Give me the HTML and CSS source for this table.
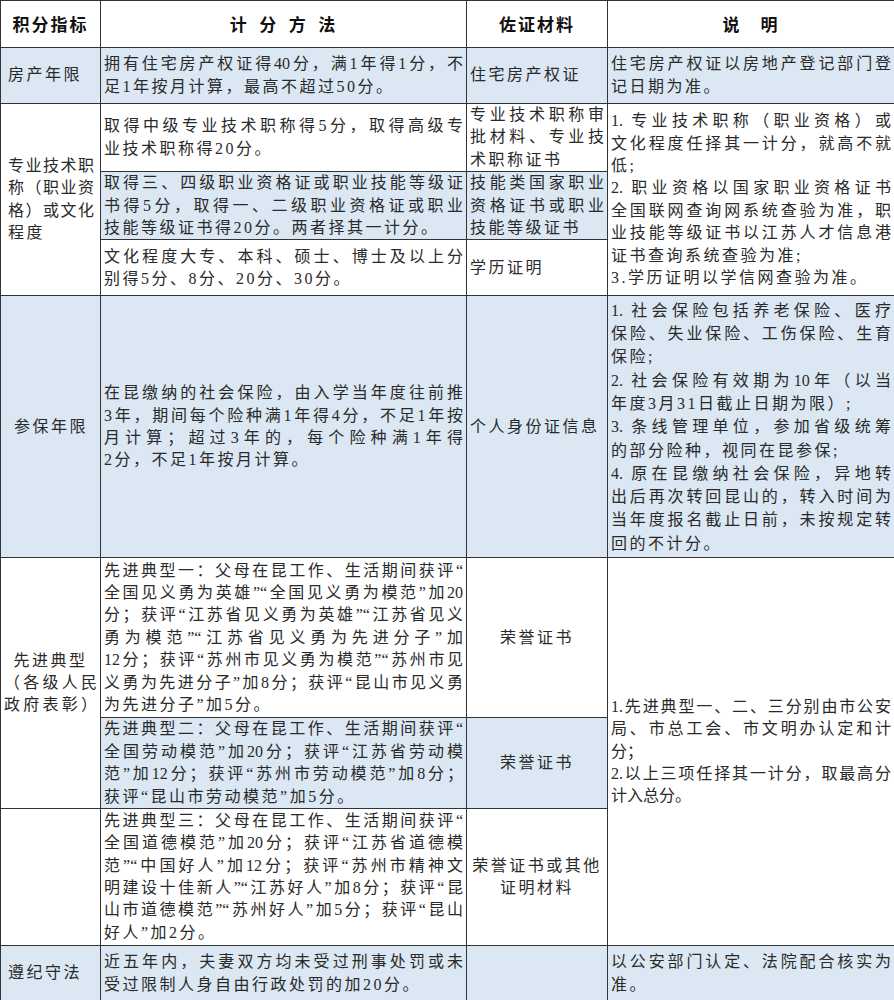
FILE: index.html
```html
<!DOCTYPE html>
<html lang="zh-CN">
<head>
<meta charset="utf-8">
<title>积分指标</title>
<link rel="stylesheet" href="styles.css">
</head>
<body>
<table class="grid">
  <colgroup>
    <col class="col-index">
    <col class="col-method">
    <col class="col-proof">
    <col class="col-note">
  </colgroup>
  <tr class="row-head">
    <th>积分指标</th>
    <th>计&ensp;分&ensp;方&ensp;法</th>
    <th>佐证材料</th>
    <th>说　明</th>
  </tr>
  <tr class="row-house blue">
    <td class="idx"><span class="e">房产年限</span></td>
    <td><span class="f">拥有住宅房产权证得40分，满1年得1分，不</span><span class="e">足1年按月计算，最高不超过50分。</span></td>
    <td><span class="e">住宅房产权证</span></td>
    <td><span class="f">住宅房产权证以房地产登记部门登</span><span class="e">记日期为准。</span></td>
  </tr>
  <tr class="row-title-a">
    <td class="idx" rowspan="3"><span class="f">专业技术职</span><span class="f">称（职业资</span><span class="f">格）或文化</span><span class="e">程度</span></td>
    <td><span class="f">取得中级专业技术职称得5分，取得高级专</span><span class="e">业技术职称得20分。</span></td>
    <td><span class="f">专业技术职称审</span><span class="f">批材料、专业技</span><span class="e">术职称证书</span></td>
    <td rowspan="3"><span class="f">1.&nbsp;专业技术职称（职业资格）或</span><span class="f">文化程度任择其一计分，就高不就</span><span class="e">低;</span><span class="f">2.&nbsp;职业资格以国家职业资格证书</span><span class="f">全国联网查询网系统查验为准，职</span><span class="f">业技能等级证书以江苏人才信息港</span><span class="e">证书查询系统查验为准;</span><span class="e">3.学历证明以学信网查验为准。</span></td>
  </tr>
  <tr class="row-title-b">
    <td class="blue"><span class="f">取得三、四级职业资格证或职业技能等级证</span><span class="f">书得5分，取得一、二级职业资格证或职业</span><span class="e">技能等级证书得20分。两者择其一计分。</span></td>
    <td class="blue"><span class="f">技能类国家职业</span><span class="f">资格证书或职业</span><span class="e">技能等级证书</span></td>
  </tr>
  <tr class="row-title-c">
    <td><span class="f">文化程度大专、本科、硕士、博士及以上分</span><span class="e">别得5分、8分、20分、30分。</span></td>
    <td><span class="e">学历证明</span></td>
  </tr>
  <tr class="row-insure blue">
    <td class="idx center"><span class="e">参保年限</span></td>
    <td><span class="f">在昆缴纳的社会保险，由入学当年度往前推</span><span class="f">3年，期间每个险种满1年得4分，不足1年按</span><span class="f">月计算；超过3年的，每个险种满1年得</span><span class="e">2分，不足1年按月计算。</span></td>
    <td><span class="e">个人身份证信息</span></td>
    <td class="tall"><span class="f">1.&nbsp;社会保险包括养老保险、医疗</span><span class="f">保险、失业保险、工伤保险、生育</span><span class="e">保险;</span><span class="f">2.&nbsp;社会保险有效期为10年（以当</span><span class="e">年度3月31日截止日期为限）;</span><span class="f">3.&nbsp;条线管理单位，参加省级统筹</span><span class="e">的部分险种，视同在昆参保;</span><span class="f">4.&nbsp;原在昆缴纳社会保险，异地转</span><span class="f">出后再次转回昆山的，转入时间为</span><span class="f">当年度报名截止日前，未按规定转</span><span class="e">回的不计分。</span></td>
  </tr>
  <tr class="row-model-a">
    <td class="idx tight" rowspan="2"><span class="m">先进典型</span><span class="f">（各级人民</span><span class="f">政府表彰）</span></td>
    <td><span class="f">先进典型一：父母在昆工作、生活期间获评“</span><span class="f">全国见义勇为英雄”“全国见义勇为模范”加20</span><span class="f">分；获评“江苏省见义勇为英雄”“江苏省见义</span><span class="f">勇为模范”“江苏省见义勇为先进分子”加</span><span class="f">12分；获评“苏州市见义勇为模范”“苏州市见</span><span class="f">义勇为先进分子”加8分；获评“昆山市见义勇</span><span class="e">为先进分子”加5分。</span></td>
    <td class="center"><span class="m">荣誉证书</span></td>
    <td rowspan="3" class="plain"><span class="f">1.先进典型一、二、三分别由市公安</span><span class="f">局、市总工会、市文明办认定和计</span><span class="e">分；</span><span class="f">2.以上三项任择其一计分，取最高分</span><span class="e">计入总分。</span></td>
  </tr>
  <tr class="row-model-b">
    <td class="blue"><span class="f">先进典型二：父母在昆工作、生活期间获评“</span><span class="f">全国劳动模范”加20分；获评“江苏省劳动模</span><span class="f">范”加12分；获评“苏州市劳动模范”加8分；</span><span class="e">获评“昆山市劳动模范”加5分。</span></td>
    <td class="blue center"><span class="m">荣誉证书</span></td>
  </tr>
  <tr class="row-model-c">
    <td></td>
    <td><span class="f">先进典型三：父母在昆工作、生活期间获评“</span><span class="f">全国道德模范”加20分；获评“江苏省道德模</span><span class="f">范”“中国好人”加12分；获评“苏州市精神文</span><span class="f">明建设十佳新人”“江苏好人”加8分；获评“昆</span><span class="f">山市道德模范”“苏州好人”加5分；获评“昆山</span><span class="e">好人”加2分。</span></td>
    <td class="center"><span class="m">荣誉证书或其他</span><span class="m">证明材料</span></td>
  </tr>
  <tr class="row-law blue">
    <td class="idx"><span class="e">遵纪守法</span></td>
    <td><span class="f">近五年内，夫妻双方均未受过刑事处罚或未</span><span class="e">受过限制人身自由行政处罚的加20分。</span></td>
    <td></td>
    <td><span class="f">以公安部门认定、法院配合核实为</span><span class="e">准。</span></td>
  </tr>
</table>
</body>
</html>
```

FILE: styles.css
```css
* {
  box-sizing: border-box;
}

body {
  margin: 0;
  background: #ffffff;
  color: #2a2a2a;
  font-family: "Liberation Serif", "Noto Sans CJK SC", serif;
}

.grid {
  width: 894px;
  border-collapse: collapse;
  table-layout: fixed;
}

.col-index { width: 100px; }
.col-method { width: 366px; }
.col-proof { width: 141px; }
.col-note { width: 287px; }

.grid th,
.grid td {
  border: 1px solid #333333;
  padding: 0 3px;
  font-size: 16px;
  font-weight: 400;
  line-height: 22.4px;
  vertical-align: middle;
  text-align: left;
}

.grid th {
  font-family: "Noto Sans CJK SC", sans-serif;
  font-weight: 700;
  font-size: 17px;
  color: #111111;
  text-align: center;
  letter-spacing: 2px;
}

.row-head { height: 47px; }
.row-house { height: 56px; }
.row-title-a { height: 68px; }
.row-title-b { height: 68px; }
.row-title-c { height: 56px; }
.row-insure { height: 262px; }
.row-model-a { height: 160px; }
.row-model-b { height: 90px; }
.row-model-c { height: 137px; }
.row-law { height: 56px; }

.blue,
.blue td {
  background: #dbe7f3;
}

.grid td.idx {
  padding: 0 6px 0 7px;
}

.grid td.idx.tight {
  padding: 0 3px;
}

.f {
  display: block;
  text-align: justify;
  text-align-last: justify;
}

.e {
  display: block;
  white-space: nowrap;
  letter-spacing: 2.5px;
}

.m {
  display: block;
  white-space: nowrap;
  letter-spacing: 2.5px;
  text-align: center;
}

.center .e {
  text-align: center;
}

.grid td.tall {
  line-height: 23.3px;
}

.plain .e {
  letter-spacing: 0;
}
```
